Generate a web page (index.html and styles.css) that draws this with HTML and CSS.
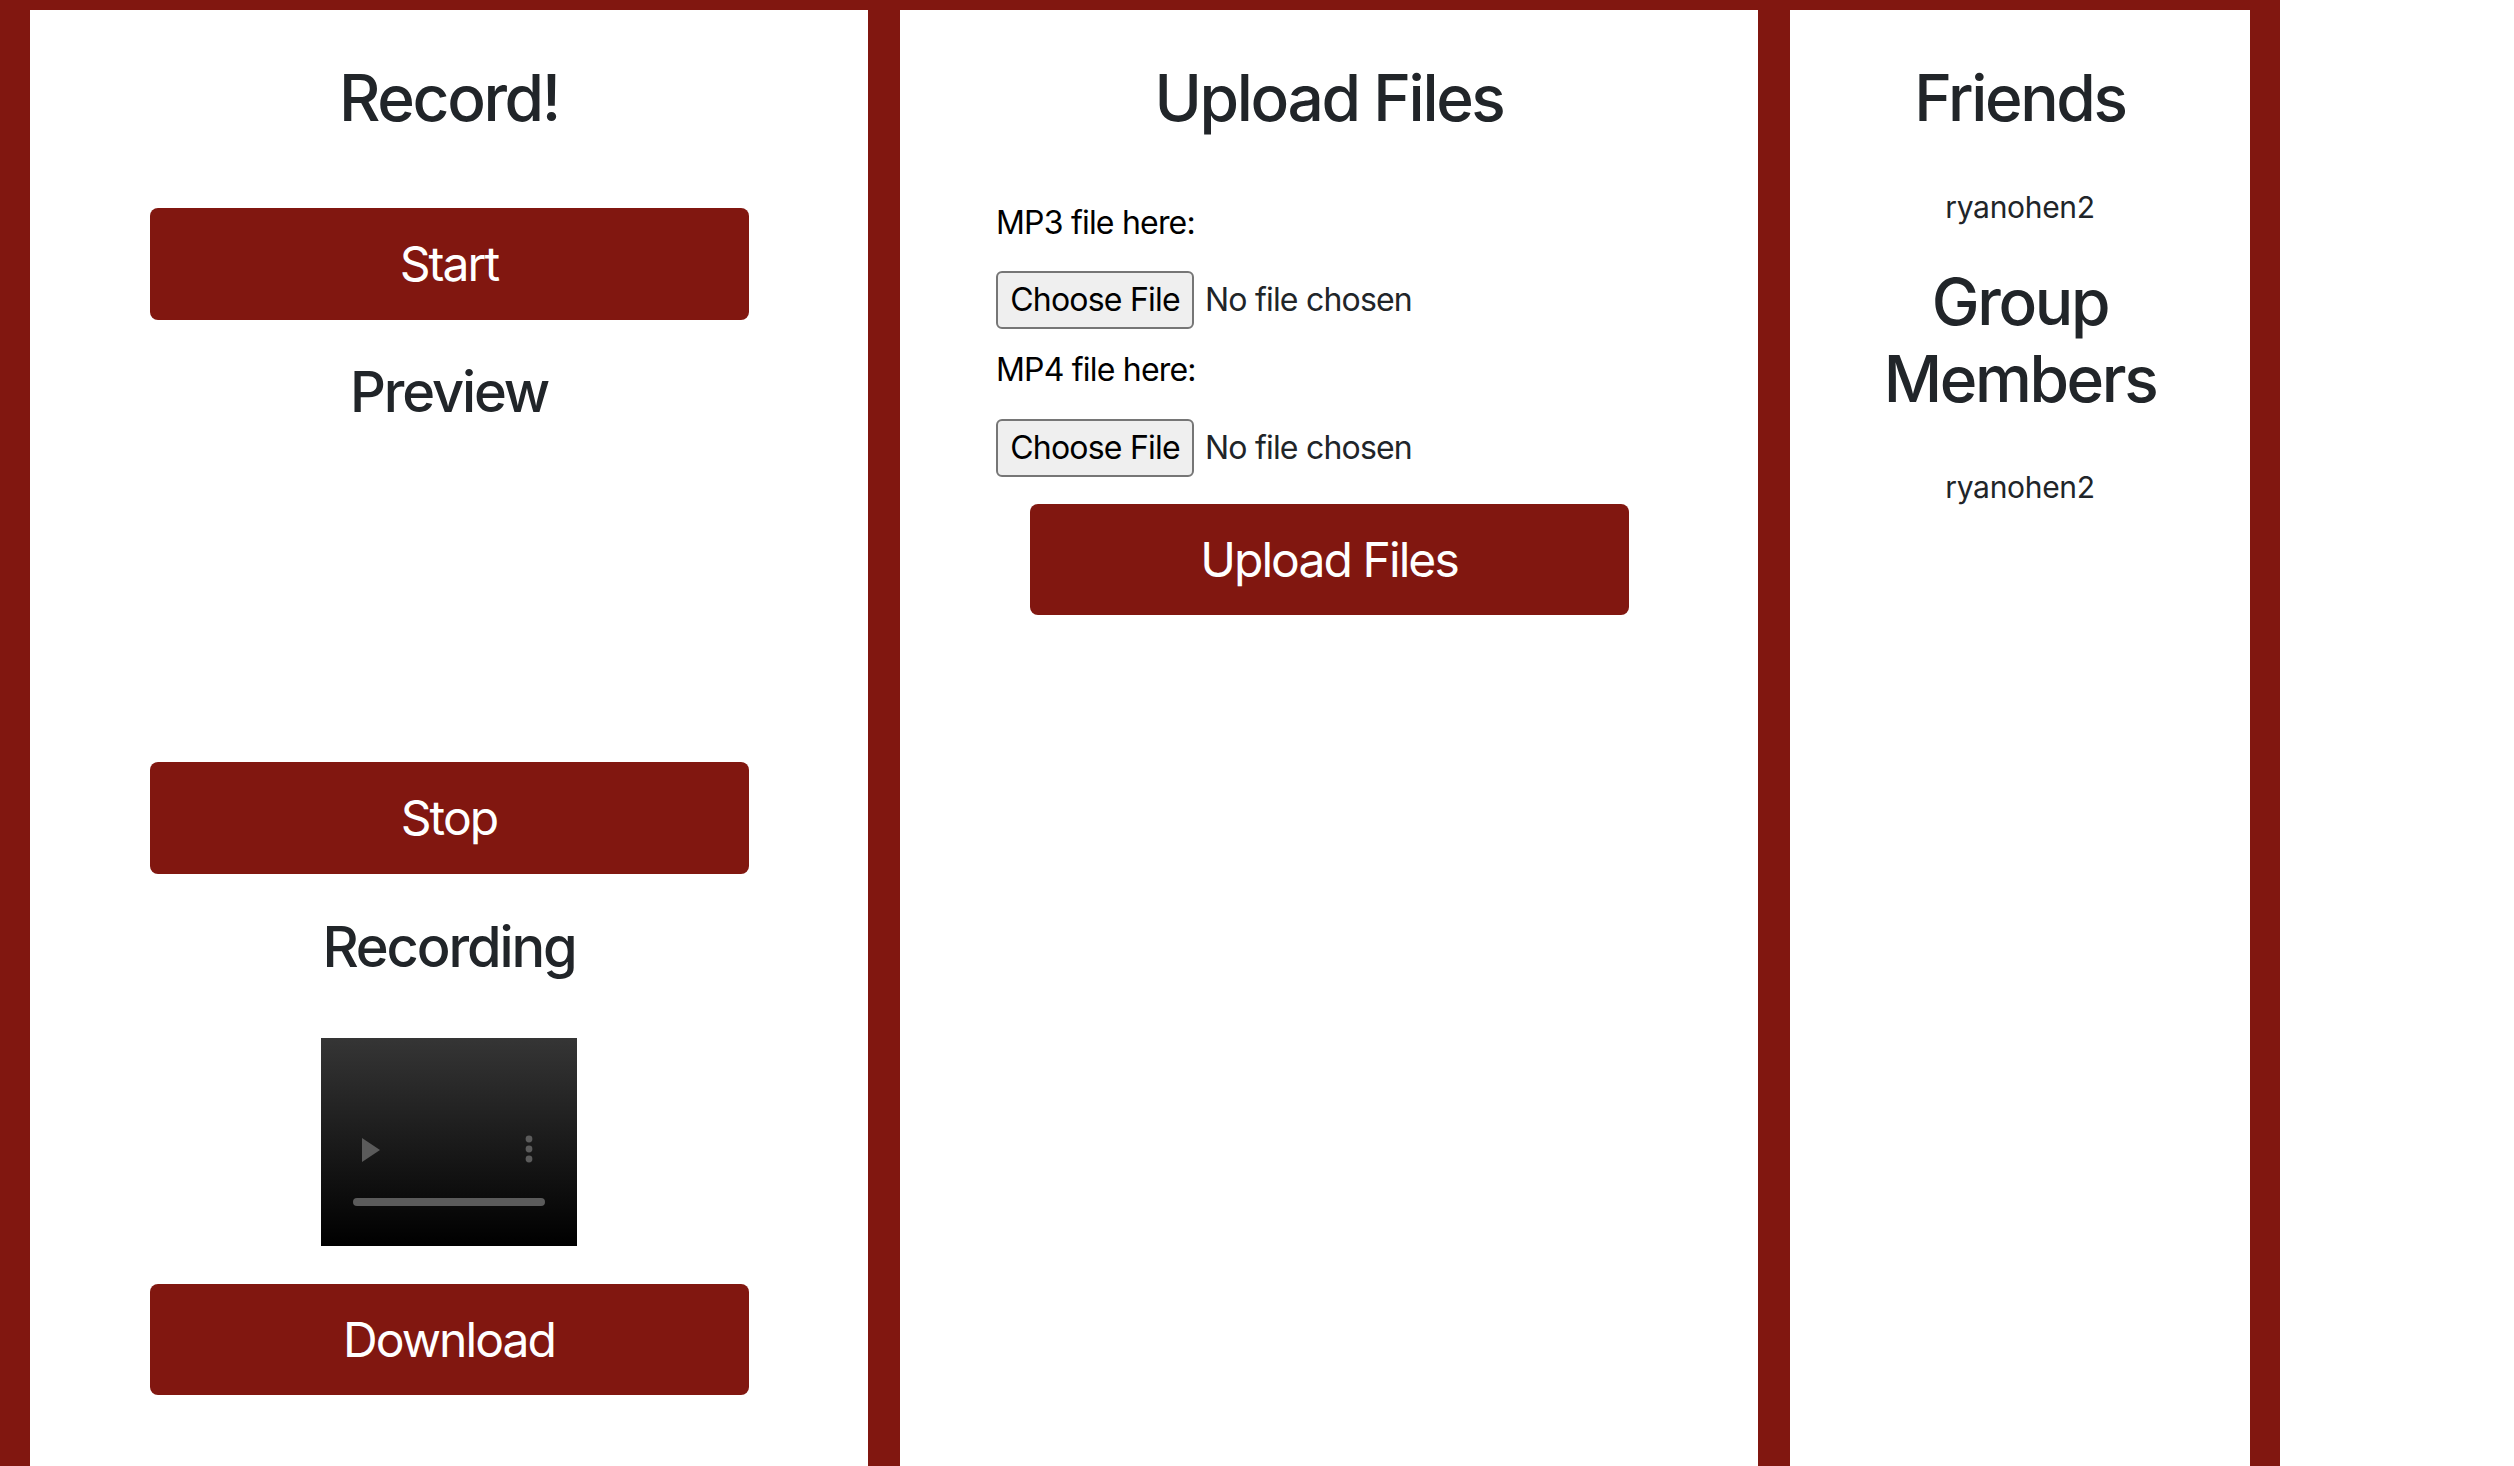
FILE: index.html
```html
<!DOCTYPE html>
<html lang="en">
<head>
<meta charset="utf-8">
<title>Record</title>
<link rel="stylesheet" href="styles.css">
</head>
<body>
<div class="page">
  <section class="panel panel-record">
    <h2 class="title">Record!</h2>
    <button class="btn btn-start">Start</button>
    <h3 class="subtitle sub-preview">Preview</h3>
    <div class="preview-video"></div>
    <button class="btn btn-stop">Stop</button>
    <h3 class="subtitle sub-recording">Recording</h3>
    <div class="video">
      <svg width="256" height="208" viewBox="0 0 256 208">
        <defs>
          <linearGradient id="vg" x1="0" y1="0" x2="0" y2="1">
            <stop offset="0" stop-color="#353535"/>
            <stop offset="1" stop-color="#000000"/>
          </linearGradient>
        </defs>
        <rect x="0" y="0" width="256" height="208" fill="url(#vg)"/>
        <polygon points="41,100 59,112 41,124" fill="#5b5b5b"/>
        <circle cx="208" cy="101" r="3.4" fill="#5b5b5b"/>
        <circle cx="208" cy="111" r="3.4" fill="#5b5b5b"/>
        <circle cx="208" cy="121" r="3.4" fill="#5b5b5b"/>
        <rect x="32" y="160" width="192" height="8" rx="4" fill="#5b5b5b"/>
      </svg>
    </div>
    <button class="btn btn-download">Download</button>
  </section>

  <section class="panel panel-upload">
    <h2 class="title">Upload Files</h2>
    <div class="fields">
      <label class="field-label label-mp3">MP3 file here:</label>
      <div class="file-row row-mp3">
        <span class="file-btn">Choose File</span>
        <span class="file-text">No file chosen</span>
      </div>
      <label class="field-label label-mp4">MP4 file here:</label>
      <div class="file-row row-mp4">
        <span class="file-btn">Choose File</span>
        <span class="file-text">No file chosen</span>
      </div>
    </div>
    <button class="btn btn-upload">Upload Files</button>
  </section>

  <section class="panel panel-friends">
    <h2 class="title">Friends</h2>
    <p class="name name-friend">ryanohen2</p>
    <h2 class="title title-group">Group Members</h2>
    <p class="name name-member">ryanohen2</p>
  </section>
</div>
</body>
</html>
```

FILE: styles.css
```css
* {
  box-sizing: border-box;
}

html, body {
  margin: 0;
  padding: 0;
  background: #ffffff;
}

body {
  font-family: Inter, "Liberation Sans", sans-serif;
  color: #212529;
}

.page {
  width: 2280px;
  min-height: 1466px;
  background: #811710;
  display: flex;
  align-items: stretch;
  gap: 32px;
  padding: 10px 30px 0 30px;
}

.panel {
  background: #ffffff;
  display: flex;
  flex-direction: column;
  align-items: center;
  padding-top: 50px;
}

.panel-record {
  width: 838px;
}

.panel-upload {
  width: 858px;
}

.panel-friends {
  width: 460px;
  padding-left: 20px;
  padding-right: 20px;
}

.title {
  margin: 0;
  font-size: 64px;
  line-height: 1.2;
  font-weight: 500;
  text-align: center;
  letter-spacing: -0.037em;
}

.subtitle {
  margin: 0;
  font-size: 56px;
  line-height: 1.2;
  font-weight: 500;
  text-align: center;
  letter-spacing: -0.038em;
}

.btn {
  width: 599px;
  height: 112px;
  border: none;
  border-radius: 8px;
  background: #811710;
  color: #ffffff;
  font-family: Inter, "Liberation Sans", sans-serif;
  font-size: 48px;
  font-weight: 400;
  letter-spacing: -0.04em;
  padding: 0;
  display: flex;
  align-items: center;
  justify-content: center;
}

.btn-start {
  margin-top: 71px;
}

.sub-preview {
  margin-top: 39px;
}

.preview-video {
  width: 256px;
  height: 336px;
}

.sub-recording {
  margin-top: 40px;
}

.video {
  margin-top: 57px;
  width: 256px;
  height: 208px;
  display: flex;
}

.btn-download {
  margin-top: 38px;
  height: 111px;
}

.fields {
  align-self: flex-start;
  margin-left: 96px;
  display: flex;
  flex-direction: column;
  align-items: flex-start;
}

.field-label {
  font-size: 32px;
  line-height: 48px;
  color: #000000;
  letter-spacing: -0.025em;
}

.label-mp3 {
  margin-top: 62px;
}

.label-mp4 {
  margin-top: 17px;
}

.file-row {
  display: flex;
  align-items: center;
  height: 58px;
}

.row-mp3 {
  margin-top: 24px;
}

.row-mp4 {
  margin-top: 25px;
}

.file-btn {
  width: 198px;
  height: 58px;
  background: #efefef;
  border: 2px solid #767676;
  border-radius: 6px;
  color: #000000;
  font-size: 32px;
  letter-spacing: -0.025em;
  display: flex;
  align-items: center;
  justify-content: center;
}

.file-text {
  margin-left: 11px;
  font-size: 32px;
  color: #212529;
  letter-spacing: -0.025em;
}

.btn-upload {
  margin-top: 27px;
  height: 111px;
}

.name {
  margin: 0;
  font-size: 30px;
  line-height: 42px;
  text-align: center;
  letter-spacing: -0.01em;
}

.name-friend {
  margin-top: 49px;
}

.title-group {
  margin-top: 36px;
}

.name-member {
  margin-top: 49px;
}
```
